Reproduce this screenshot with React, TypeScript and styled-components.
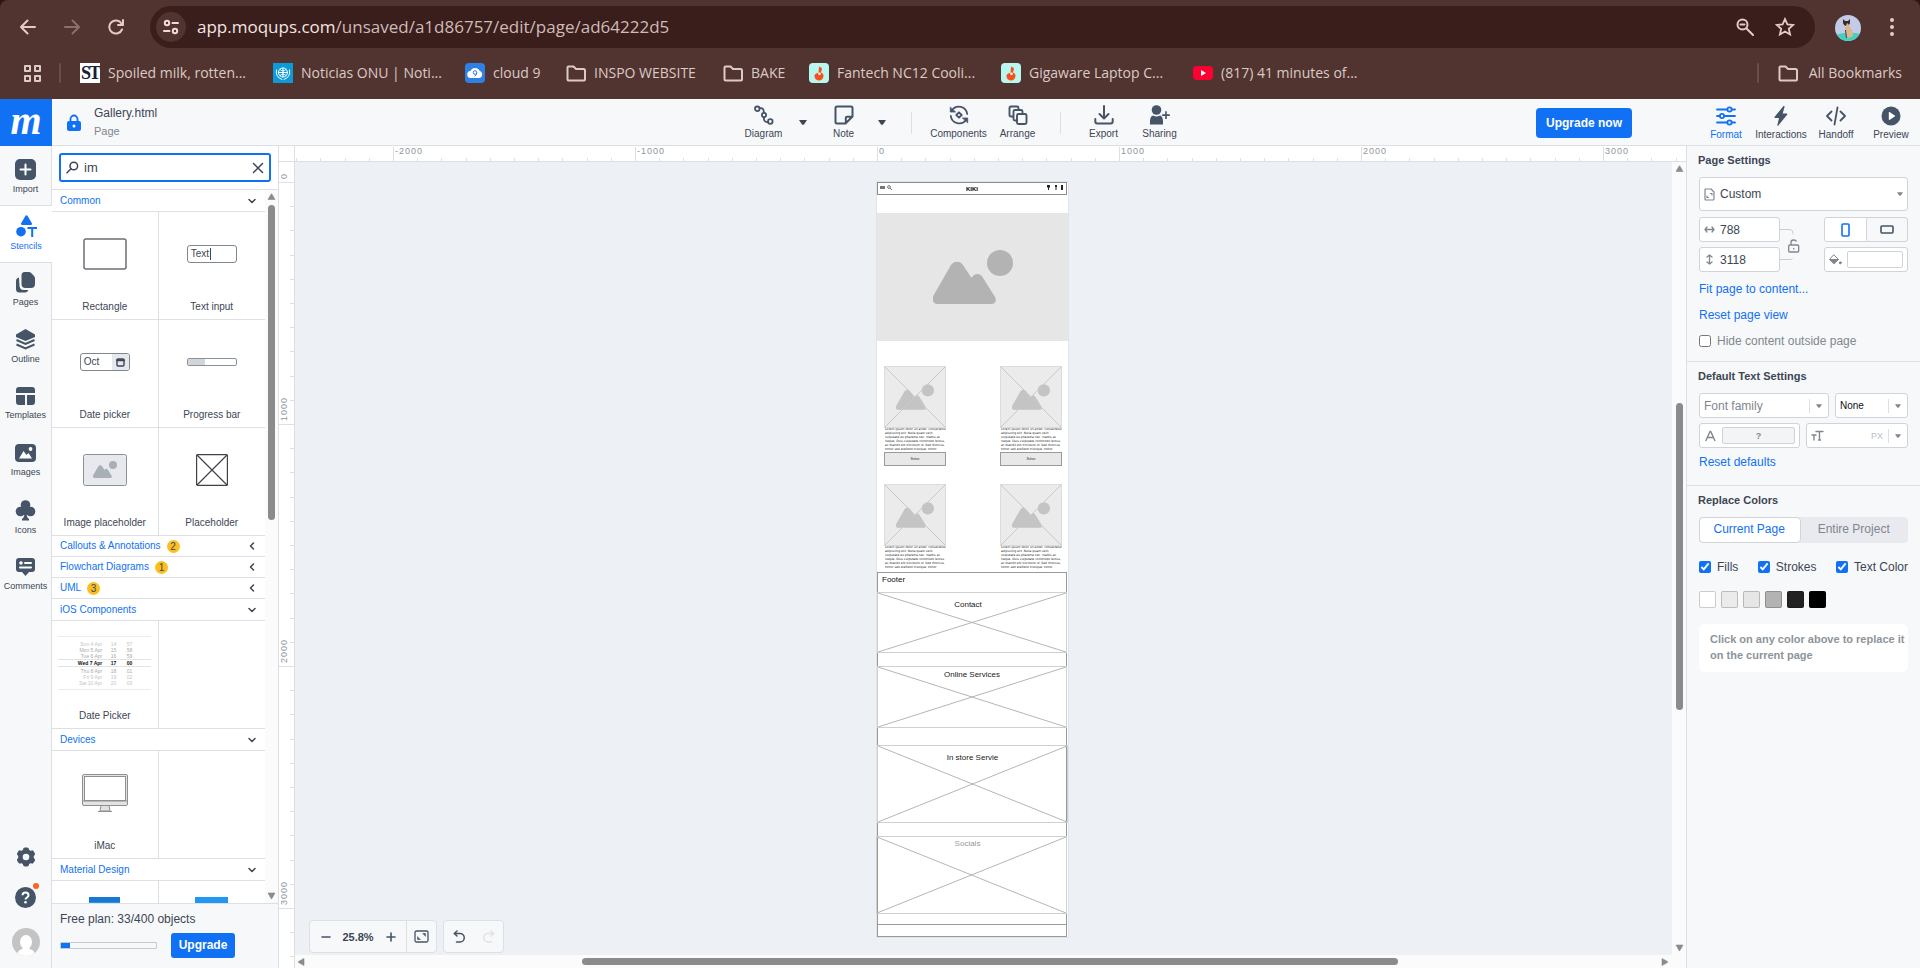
import React from "react";
import styled, { createGlobalStyle } from "styled-components";

const color = {
  chrome: "#513430",
  pill: "#3a1e1b",
  chromeText: "#dccac6",
  blue: "#1071f5",
  ink: "#3c4654",
  icon: "#455467",
  muted: "#7f878e",
  line: "#dcdfe4",
  field: "#d0d3d7",
  panel: "#f7f8fa",
  canvas: "#edf0f5",
  thumb: "#8b8b8b",
};
const sans = `"Liberation Sans", Arial, sans-serif`;
const ui = `"Open Sans", "Noto Sans", sans-serif`;

const GlobalStyle = createGlobalStyle`
  * { box-sizing: border-box; }
  body { margin: 0; font-family: ${sans}; color: ${color.ink}; }
  button, input, select { font: inherit; color: inherit; margin: 0; }
  button { border: 0; background: none; padding: 0; }
  svg { display: block; flex: none; }
`;

const Page = styled.div`
  display: flex;
  flex-direction: column;
  height: 100vh;
  min-height: 700px;
  overflow: hidden;
`;

/* ---------- browser bars ---------- */
const Browser = styled.header`
  flex: none;
  background: ${color.chrome};
  color: ${color.chromeText};
  font-family: ${ui};
  border-radius: 8px 8px 0 0;
  box-shadow: 0 -8px 0 8px #2b1613;
`;
const AddressRow = styled.div`
  display: flex;
  align-items: center;
  height: 54px;
  padding: 0 26px 0 16px;
`;
const ChromeButton = styled.button<{ $dim?: boolean; $gap?: number }>`
  width: 24px;
  height: 24px;
  margin-right: ${(p) => p.$gap ?? 20}px;
  display: grid;
  place-items: center;
  color: ${(p) => (p.$dim ? "#8d6f6a" : "#eac9c3")};
`;
const Omnibox = styled.div`
  flex: 1;
  display: flex;
  align-items: center;
  height: 42px;
  margin: 0 20px 0 2px;
  padding: 0 18px 0 6px;
  border-radius: 21px;
  background: ${color.pill};
`;
const SiteInfo = styled.button`
  width: 30px;
  height: 30px;
  border-radius: 50%;
  background: ${color.chrome};
  color: #efdcd8;
  display: grid;
  place-items: center;
`;
const Url = styled.div`
  flex: 1;
  margin-left: 11px;
  font-size: 17px;
  line-height: 24px;
  color: #cfbbb7;
  span { color: #f3e6e3; }
`;
const OmniButton = styled.button`
  width: 24px;
  height: 24px;
  margin-left: 16px;
  display: grid;
  place-items: center;
  color: #e3cbc6;
`;
const BookmarkRow = styled.nav`
  display: flex;
  align-items: center;
  height: 45px;
  padding: 0 18px 8px 23px;
  font-size: 14px;
  line-height: 20px;
`;
const Bar = styled.span`
  width: 2px;
  height: 20px;
  border-radius: 1px;
  background: #6d4c47;
  margin: 0 19px 0 18px;
`;
const Bookmark = styled.a<{ $label: number }>`
  display: flex;
  align-items: center;
  gap: 8px;
  margin-right: 24px;
  color: inherit;
  text-decoration: none;
  white-space: nowrap;
  span { width: ${(p) => p.$label}px; }
`;
const AllBookmarks = styled.a`
  display: flex;
  align-items: center;
  gap: 11px;
  color: inherit;
  text-decoration: none;
`;
const Favicon = styled.i<{ $bg: string; $round?: boolean }>`
  width: 20px;
  height: 20px;
  display: grid;
  place-items: center;
  font-style: normal;
  overflow: hidden;
  background: ${(p) => p.$bg};
  border-radius: ${(p) => (p.$round ? 4 : 0)}px;
`;
const Monogram = styled.b`
  font: bold 18px/20px "Liberation Serif", serif;
  color: #14213d;
  letter-spacing: -2px;
`;
const Spacer = styled.div`
  flex: 1;
`;

/* ---------- app toolbar ---------- */
const TopBar = styled.header`
  flex: none;
  height: 47px;
  display: grid;
  grid-template-columns: 1fr auto 1fr;
  background: ${color.panel};
  border-bottom: 1px solid ${color.line};
`;
const TopSide = styled.div<{ $end?: boolean }>`
  display: flex;
  align-items: center;
  justify-content: ${(p) => (p.$end ? "flex-end" : "flex-start")};
`;
const Logo = styled.a`
  width: 52px;
  height: 47px;
  background: ${color.blue};
  color: #fff;
  text-align: center;
  text-decoration: none;
  font: italic bold 40px/44px "Liberation Serif", serif;
`;
const LockButton = styled.button`
  width: 14px;
  margin: 0 13px 0 15px;
  color: ${color.blue};
`;
const FileTitle = styled.div`
  padding-bottom: 2px;
  font-size: 12px;
  line-height: 18px;
  span { display: block; font-size: 11px; color: ${color.muted}; }
`;
const ToolGroup = styled.div`
  display: flex;
  padding-left: 14px;
`;
const Tool = styled.button<{ $w: number; $active?: boolean }>`
  width: ${(p) => p.$w}px;
  height: 46px;
  display: flex;
  flex-direction: column;
  align-items: center;
  padding-top: 6px;
  gap: 2px;
  font-size: 10px;
  line-height: 14px;
  color: ${(p) => (p.$active ? color.blue : color.icon)};
  span { color: ${(p) => (p.$active ? color.blue : color.ink)}; }
`;
const CaretButton = styled.button<{ $end?: boolean }>`
  width: 16px;
  height: 46px;
  display: grid;
  place-items: center;
  color: ${color.ink};
  margin: ${(p) => (p.$end ? "0 0 0 15px" : "0 18px 0 13px")};
`;
const ToolDivider = styled.span<{ $wide?: boolean }>`
  width: 1px;
  height: 22px;
  align-self: center;
  background: ${color.line};
  margin: ${(p) => (p.$wide ? "0 20px 0 21px" : "0 16px 0 10px")};
`;
const PrimaryButton = styled.button<{ $large?: boolean }>`
  flex: none;
  width: ${(p) => (p.$large ? 96 : 64)}px;
  height: ${(p) => (p.$large ? 30 : 25)}px;
  border-radius: ${(p) => (p.$large ? 4 : 3)}px;
  background: ${color.blue};
  color: #fff;
  font-size: 12px;
  font-weight: bold;
`;
const ModeTools = styled.div`
  display: flex;
  margin: 0 2px 0 66px;
`;

/* ---------- workspace ---------- */
const Workspace = styled.div`
  flex: 1;
  min-height: 0;
  display: flex;
`;
const Rail = styled.nav`
  flex: none;
  width: 52px;
  display: flex;
  flex-direction: column;
  background: ${color.panel};
  border-right: 1px solid ${color.line};
`;
const RailItem = styled.button<{ $active?: boolean; $tall?: boolean }>`
  height: ${(p) => (p.$tall ? 60 : 57)}px;
  margin-right: ${(p) => (p.$active ? -1 : 0)}px;
  padding-top: ${(p) => (p.$tall ? 13 : 9)}px;
  display: flex;
  flex-direction: column;
  align-items: center;
  gap: 3px;
  font-size: 9px;
  line-height: 12px;
  color: ${(p) => (p.$active ? color.blue : color.icon)};
  background: ${(p) => (p.$active ? "#fff" : "transparent")};
  border-bottom: ${(p) => (p.$active || p.$tall ? `1px solid ${color.line}` : "0")};
  span { color: ${(p) => (p.$active ? color.blue : color.ink)}; }
`;
const RailFoot = styled.div`
  margin-top: auto;
  padding-bottom: 12px;
  display: flex;
  flex-direction: column;
  align-items: center;
  gap: 20px;
  color: ${color.icon};
`;
const HelpButton = styled.button`
  position: relative;
  color: inherit;
`;
const Alert = styled.span`
  position: absolute;
  right: -3px;
  top: -4px;
  width: 6px;
  height: 6px;
  border-radius: 50%;
  background: #ff6320;
`;

const StencilPanel = styled.aside`
  flex: none;
  width: 227px;
  display: flex;
  flex-direction: column;
  background: #fff;
  border-right: 1px solid ${color.line};
`;
const SearchBox = styled.label`
  flex: none;
  height: 29px;
  margin: 7px;
  display: flex;
  align-items: center;
  padding: 0 5px;
  border: 2px solid ${color.blue};
  border-radius: 3px;
`;
const SearchInput = styled.input`
  flex: 1;
  min-width: 0;
  border: 0;
  outline: 0;
  padding: 0 0 0 5px;
  font-size: 13px;
  background: transparent;
`;
const StencilBody = styled.div`
  flex: 1;
  min-height: 0;
  display: flex;
  border-top: 1px solid ${color.line};
`;
const StencilList = styled.div`
  flex: 1;
  overflow: hidden;
`;
const SectionHead = styled.button<{ $open?: boolean }>`
  width: 100%;
  height: ${(p) => (p.$open ? 22 : 21)}px;
  display: flex;
  align-items: center;
  gap: 6px;
  padding: 0 9px 0 8px;
  border-bottom: 1px solid ${color.line};
  font-size: 10px;
  line-height: 16px;
  color: ${color.blue};
  svg { margin-left: auto; color: ${color.ink}; }
`;
const Count = styled.span`
  width: 13px;
  height: 13px;
  border-radius: 50%;
  background: #fcbf22;
  color: ${color.ink};
  line-height: 13px;
  text-align: center;
`;
const StencilGrid = styled.div`
  display: grid;
  grid-template-columns: 1fr 1fr;
`;
const Stencil = styled.button`
  height: 108px;
  border-bottom: 1px solid ${color.line};
  display: flex;
  flex-direction: column;
  align-items: center;
  font-size: 10px;
  line-height: 14px;
  &:nth-child(odd) { border-right: 1px solid ${color.line}; }
`;
const Thumb = styled.span`
  height: 88px;
  padding-bottom: 4px;
  display: grid;
  place-items: center;
`;
const FieldThumb = styled.span`
  width: 50px;
  height: 18px;
  border: 1px solid #7e8890;
  border-radius: 3px;
  padding-left: 3px;
  text-align: left;
  line-height: 16px;
  display: flex;
  align-items: center;
  justify-content: space-between;
  overflow: hidden;
`;
const TextCaret = styled.span`
  display: inline-block;
  width: 1px;
  height: 12px;
  margin-left: 1px;
  vertical-align: middle;
  background: ${color.ink};
`;
const CalendarCap = styled.span`
  width: 17px;
  height: 16px;
  background: #e7e8ed;
  display: grid;
  place-items: center;
  color: ${color.ink};
`;
const Wheel = styled.span`
  width: 93px;
  height: 54px;
  display: grid;
  align-content: space-between;
  border: solid #ececec;
  border-width: 1px 0;
  padding: 4px 0 3px;
  font-size: 5px;
  line-height: 6px;
`;
const WheelRow = styled.span<{ $on?: boolean; $faint?: boolean }>`
  display: grid;
  grid-template-columns: 44px 14px 16px;
  justify-content: start;
  text-align: right;
  color: ${(p) => (p.$on ? "#111" : p.$faint ? "#c4c4c4" : "#aaa")};
  font-weight: ${(p) => (p.$on ? "bold" : "normal")};
  border: solid #e3e3e3;
  border-width: ${(p) => (p.$on ? "1px 0" : "0")};
`;
const PlanFoot = styled.footer`
  flex: none;
  height: 65px;
  padding: 8px 8px 0;
  background: ${color.panel};
  border-top: 1px solid ${color.line};
  font-size: 12px;
  line-height: 15px;
`;
const PlanRow = styled.div`
  display: flex;
  align-items: center;
  gap: 14px;
  margin-top: 6px;
`;
const Meter = styled.div`
  width: 97px;
  height: 7px;
  border: 1px solid #c5cad0;
  border-radius: 1px;
  background: #f7f8fa;
  &::before {
    content: "";
    display: block;
    width: 9%;
    height: 5px;
    background: ${color.blue};
  }
`;

/* ---------- scroll bars ---------- */
const Track = styled.div<{ $row?: boolean; $size: number }>`
  flex: none;
  display: flex;
  flex-direction: ${(p) => (p.$row ? "row" : "column")};
  align-items: center;
  background: #fbfbfb;
  color: ${color.thumb};
  ${(p) =>
    p.$row
      ? `height: ${p.$size}px; padding: 0 2px;`
      : `width: ${p.$size}px; padding: 3px 0;`}
  svg { margin: ${(p) => (p.$row ? "0 4px 0 0" : "0 0 4px")}; }
  svg:last-child { margin: ${(p) => (p.$row ? "0 0 0 4px" : "4px 0 0")}; }
`;
const Space = styled.span<{ $n: number }>`
  flex: ${(p) => p.$n} 1 0;
`;
const Handle = styled.span<{ $n: number; $row?: boolean }>`
  flex: ${(p) => p.$n} 1 0;
  ${(p) => (p.$row ? "height" : "width")}: 7px;
  border-radius: 4px;
  background: ${color.thumb};
`;

/* ---------- canvas ---------- */
const CanvasArea = styled.main`
  flex: 1;
  min-width: 0;
  display: grid;
  grid-template: 16px 1fr / 16px 1fr;
  background: #fff;
`;
const RulerCorner = styled.div`
  border: solid ${color.line};
  border-width: 0 1px 1px 0;
`;
const RulerTop = styled.div`
  overflow: hidden;
  border-bottom: 1px solid ${color.line};
`;
const RulerSide = styled.div`
  overflow: hidden;
  border-right: 1px solid ${color.line};
`;
const Stage = styled.div`
  min-width: 0;
  min-height: 0;
  display: grid;
  grid-template: 1fr 13px / 1fr 14px;
`;
const Surface = styled.div`
  position: relative;
  overflow: hidden;
  background: ${color.canvas};
`;
const TrackCorner = styled.div`
  background: #fbfbfb;
`;
const FloatBar = styled.div`
  position: absolute;
  left: 14px;
  bottom: 2px;
  display: flex;
  gap: 6px;
`;
const FloatGroup = styled.div`
  display: flex;
  align-items: center;
  height: 33px;
  background: ${color.panel};
  border: 1px solid ${color.line};
  border-radius: 4px;
  font-size: 11px;
  font-weight: bold;
`;
const FloatButton = styled.button<{ $w: number; $off?: boolean; $split?: boolean }>`
  width: ${(p) => p.$w}px;
  height: 31px;
  display: grid;
  place-items: center;
  color: ${(p) => (p.$off ? "#dfe2e7" : color.icon)};
  border-left: ${(p) => (p.$split ? `1px solid ${color.line}` : "0")};
`;
const ZoomValue = styled.output`
  width: 34px;
  text-align: center;
`;

/* the document page, on which every object has its own place */
const Artboard = styled.div`
  position: absolute;
  left: 582px;
  top: 20px;
  width: 191px;
  height: 755px;
  background: #fff;
  outline: 1px solid #e1e4e8;
`;
const Placed = styled.div<{ $x: number; $y: number; $w: number; $h: number; $stroke?: string; $fill?: string }>`
  position: absolute;
  left: ${(p) => p.$x}px;
  top: ${(p) => p.$y}px;
  width: ${(p) => p.$w}px;
  height: ${(p) => p.$h}px;
  border: ${(p) => (p.$stroke ? `1px solid ${p.$stroke}` : "0")};
  background: ${(p) => p.$fill || "transparent"};
`;
const SiteBar = styled(Placed)`
  display: grid;
  grid-template-columns: 1fr auto 1fr;
  align-items: center;
  padding: 0 2px 2px;
  svg:last-child { justify-self: end; }
`;
const SiteName = styled.b`
  padding-top: 2px;
  font-size: 6px;
  line-height: 8px;
  color: #000;
`;
const Copy = styled.p`
  margin: 0;
  font-family: "DejaVu Sans", sans-serif;
  font-size: 3px;
  line-height: 4px;
  white-space: pre;
  color: #222;
`;
const SmallButton = styled(Placed)`
  font-size: 3px;
  line-height: 12px;
  text-align: center;
  color: #333;
`;
const Caption = styled.div<{ $tone?: string; $pad: number; $shift?: boolean }>`
  position: relative;
  padding: ${(p) => p.$pad}px ${(p) => (p.$shift ? 8 : 0)}px 0 0;
  text-align: center;
  font-size: 8px;
  line-height: 10px;
  color: ${(p) => p.$tone || "#222"};
`;
const CrossSvg = styled.svg`
  position: absolute;
  inset: 0;
  width: 100%;
  height: 100%;
`;
const FooterText = styled.div`
  padding: 2px 4px;
  font-size: 8px;
  line-height: 10px;
  color: #111;
`;

/* ---------- format panel ---------- */
const Format = styled.aside`
  flex: none;
  width: 234px;
  background: ${color.panel};
  border-left: 1px solid ${color.line};
  font-size: 12px;
`;
const Group = styled.section`
  padding: 7px 12px 0;
  border-bottom: 1px solid ${color.line};
  &:last-child { border-bottom: 0; }
`;
const Heading = styled.h2`
  margin: 0 0 9px -1px;
  font-size: 11px;
  line-height: 15px;
`;
const Row = styled.div<{ $gap?: number; $top?: number; $bottom?: number }>`
  display: flex;
  gap: ${(p) => p.$gap ?? 6}px;
  margin-top: ${(p) => p.$top ?? 0}px;
  margin-bottom: ${(p) => p.$bottom ?? 0}px;
`;
const Field = styled.label<{ $h?: number; $w?: number }>`
  ${(p) => (p.$w ? `flex: none; width: ${p.$w}px;` : "flex: 1; min-width: 0;")}
  height: ${(p) => p.$h || 25}px;
  display: flex;
  align-items: center;
  gap: 5px;
  padding: 0 4px;
  background: #fff;
  border: 1px solid ${color.field};
  border-radius: 3px;
  color: ${color.muted};
`;
const Select = styled.select<{ $small?: boolean; $muted?: boolean }>`
  appearance: none;
  flex: 1;
  min-width: 0;
  border: 0;
  outline: 0;
  padding: 0;
  background: transparent;
  font-size: ${(p) => (p.$small ? 10 : 12)}px;
  color: ${(p) => (p.$muted ? color.muted : p.$small ? "#111" : color.ink)};
`;
const NumberInput = styled.input`
  flex: 1;
  min-width: 0;
  border: 0;
  outline: 0;
  padding: 0;
  background: transparent;
  color: ${color.ink};
`;
const CaretBox = styled.span`
  height: 14px;
  padding: 0 2px 0 6px;
  display: grid;
  place-items: center;
  border-left: 1px solid ${color.line};
`;
const Stack = styled.div<{ $w: number }>`
  flex: none;
  width: ${(p) => p.$w}px;
  display: flex;
  flex-direction: column;
  gap: 5px;
  label { flex: none; width: 100%; }
`;
const LinkMark = styled.div`
  flex: 1;
  padding-top: 12px;
`;
const Segmented = styled.div`
  display: flex;
  height: 25px;
  border: 1px solid ${color.field};
  border-radius: 3px;
`;
const Segment = styled.button<{ $on?: boolean }>`
  flex: 1;
  display: grid;
  place-items: center;
  border-radius: 3px;
  background: ${(p) => (p.$on ? "#fff" : "transparent")};
  color: ${(p) => (p.$on ? color.blue : color.icon)};
  & + & { border-left: 1px solid ${color.field}; }
`;
const ColorWell = styled.button<{ $fill: string }>`
  flex: 1;
  height: 17px;
  border: 1px solid ${color.field};
  border-radius: 2px;
  background: ${(p) => p.$fill};
  font-size: 9px;
  font-weight: bold;
  color: ${color.muted};
`;
const Unit = styled.span`
  font-size: 9px;
  color: #b9bfc5;
`;
const Action = styled.a<{ $top: number }>`
  display: block;
  width: max-content;
  margin-top: ${(p) => p.$top}px;
  line-height: 16px;
  color: ${color.blue};
  text-decoration: none;
`;
const Check = styled.label<{ $muted?: boolean }>`
  display: flex;
  align-items: center;
  gap: 6px;
  line-height: 16px;
  color: ${(p) => (p.$muted ? color.muted : color.ink)};
  input { width: 12px; height: 12px; accent-color: ${color.blue}; }
`;
const CheckRow = styled.div`
  display: flex;
  justify-content: space-between;
  margin-top: 16px;
`;
const Tabs = styled.div`
  display: flex;
  height: 26px;
  border-radius: 4px;
  background: #e9e9f0;
`;
const Tab = styled.button<{ $on?: boolean }>`
  flex: ${(p) => (p.$on ? "0 0 49%" : "1")};
  border-radius: 4px;
  border: 1px solid ${(p) => (p.$on ? color.field : "transparent")};
  background: ${(p) => (p.$on ? "#fff" : "transparent")};
  color: ${(p) => (p.$on ? color.blue : color.muted)};
  line-height: 20px;
  padding: 0 2px 3px 0;
`;
const Swatch = styled.button<{ $fill: string }>`
  width: 17px;
  height: 17px;
  border-radius: 2px;
  border: 1px solid rgba(0, 0, 0, 0.2);
  background: ${(p) => p.$fill};
`;
const Hint = styled.p`
  margin: 16px 0 0;
  padding: 7px 3px 9px 11px;
  border-radius: 6px;
  background: #fff;
  font-size: 11px;
  line-height: 16px;
  font-weight: bold;
  color: #8d949a;
`;

/* ---------- drawings ---------- */
const Svg = ({ w, h = w, vb, sw = 2, children }: { w: number; h?: number; vb?: string; sw?: number; children: React.ReactNode }) => (
  <svg width={w} height={h} viewBox={vb || `0 0 ${w} ${h}`} fill="none" stroke="currentColor" strokeWidth={sw} strokeLinecap="round" strokeLinejoin="round" aria-hidden>
    {children}
  </svg>
);
const Caret = ({ w = 8 }) => (
  <svg width={w} height={w === 8 ? 5 : 4} viewBox="0 0 8 5" fill="currentColor" aria-hidden>
    <path d="M0 0h8L5 4.4q-1 .8-2 0z" />
  </svg>
);
const Folder = () => (
  <Svg w={20} h={20} sw={2}>
    <path d="M1.5 16.5v-12q0-1 1-1h5l2.5 2.5h7.500q1.500 0 1.500 1.500v9q0 1-1 1h-15.500q-1 0-1-1z" />
  </Svg>
);
const MOUNTAINS = "M4 43C0 43-1.500 38 .5 34.500L18 4C20.500-.5 27.500-.5 30 4L38.500 17C41 12 47 11.500 49.500 16L62 36C64 40 62 43 58 43Z";
const PictureMark = ({ w, h, fill }: { w: number; h: number; fill: string }) => (
  <svg width={w} height={h} viewBox="0 0 80 54" fill={fill} aria-hidden>
    <circle cx="67" cy="13" r="13" />
    <path transform="translate(0 11)" d={MOUNTAINS} />
  </svg>
);
const Arrow = ({ dir }: { dir: "up" | "down" | "left" | "right" }) => {
  const paths = {
    up: "M1 6.500L4 1.200Q4.500.6 5 1.200L8 6.500Z",
    down: "M1 1H8L5 6.400Q4.500 7 4 6.400Z",
    left: "M7 .5V7.500L1.500 4.500Q1 4 1.500 3.500Z",
    right: "M1 .5V7.500L6.500 4.500Q7 4 6.500 3.500Z",
  };
  return (
    <svg width="9" height="8" viewBox="0 0 9 8" fill="currentColor" stroke="currentColor" strokeWidth=".6" aria-hidden>
      <path d={paths[dir]} />
    </svg>
  );
};
const Chevron = ({ open }: { open?: boolean }) => (
  <Svg w={8} h={8} sw={1.5}>
    <path d={open ? "M1 2.500L4 5.500L7 2.500" : "M5.500 1L2.500 4L5.500 7"} />
  </Svg>
);

const DiagramIcon = () => (
  <Svg w={20} sw={1.800}>
    <circle cx="3.300" cy="3.800" r="2.300" /><circle cx="10" cy="10" r="2.100" /><circle cx="16.300" cy="16.500" r="2.300" />
    <path d="M5.600 3.200C8.500 2.500 10 4 9.800 7.800M10 12.200C9.500 15.500 11 17.500 14 17" />
  </Svg>
);
const NoteIcon = () => (
  <Svg w={20} sw={2}>
    <path d="M3 1.500h14q1.500 0 1.500 1.500v8.500l-7 7H3q-1.500 0-1.500-1.500V3q0-1.500 1.500-1.500zM18 11.800h-5q-1.200 0-1.200 1.200v5" />
  </Svg>
);
const ComponentsIcon = () => (
  <Svg w={20} sw={1.800}>
    <path d="M2.800 5.500A8.400 8.400 0 0 1 18.200 9M17.200 14.500A8.400 8.400 0 0 1 1.800 11" />
    <path d="M1.300 2.500V7h5z M18.700 17.500V13h-5z" fill="currentColor" strokeWidth=".8" />
    <path d="M10 7.300L12.700 10L10 12.700L7.300 10z" />
  </Svg>
);
const ArrangeIcon = () => (
  <Svg w={20} sw={1.900}>
    <path d="M4.500 11.500H3q-1.500 0-1.500-1.500V3q0-1.500 1.500-1.500h6q1.500 0 1.500 1.500v1.500M8.500 15.500H7q-1.500 0-1.500-1.500V6.500Q5.500 5 7 5h6q1.500 0 1.500 1.500v1" />
    <rect x="9" y="9" width="9.500" height="10" rx="1.500" />
  </Svg>
);
const ExportIcon = () => (
  <Svg w={20} sw={2}>
    <path d="M10 1v12M5.500 9l4.500 4.500L14.500 9M1.300 14v2.500q0 2 2 2h13.400q2 0 2-2V14" />
  </Svg>
);
const SharingIcon = () => (
  <svg width="21" height="20" viewBox="0 0 21 20" fill="currentColor" aria-hidden>
    <circle cx="7.500" cy="5" r="4.800" />
    <path d="M1 19.500V15.500Q1.500 11 4 10.500Q7.500 12.500 11 10.500Q13.500 11 14 15.500V19.500Z" />
    <path d="M16.200 6.300v3h-3v1.600h3v3h1.600v-3h3V9.300h-3v-3z" />
  </svg>
);
const FormatIcon = () => (
  <Svg w={20} sw={1.800}>
    <path d="M1 3.500h10M16 3.500h3M1 10h2.500M8.500 10H19M1 16.500h10M16 16.500h3" />
    <circle cx="13.500" cy="3.500" r="2.100" /><circle cx="6" cy="10" r="2.100" /><circle cx="13.500" cy="16.500" r="2.100" />
  </Svg>
);
const BoltIcon = () => (
  <svg width="20" height="20" viewBox="0 0 20 20" fill="currentColor" aria-hidden>
    <path d="M12.500 0L3.500 11Q3 12 4 12h4L6.300 19.500Q6.500 20.300 7.300 19.600L16.300 8.500Q16.800 7.500 15.700 7.500H11.700L13.600.8Q13.500-.5 12.500 0z" />
  </svg>
);
const CodeIcon = () => (
  <Svg w={20} sw={1.800}><path d="M5.500 5.500L1 10l4.500 4.500M14.500 5.500L19 10l-4.500 4.500M11.500 1.500l-3 17" /></Svg>
);
const PlayIcon = () => (
  <svg width="20" height="20" viewBox="0 0 20 20" aria-hidden>
    <circle cx="10" cy="10" r="9.500" fill="currentColor" />
    <path d="M7.800 6.600v6.800q.2.800 1 .3l5-3.300q.5-.4 0-.8l-5-3.300q-.8-.5-1 .3z" fill="#fff" />
  </svg>
);

const Fill = ({ children, h = 20 }: { children: React.ReactNode; h?: number }) => (
  <svg width="21" height={h} viewBox={`0 0 21 ${h}`} fill="currentColor" aria-hidden>{children}</svg>
);
const railItems: { label: string; icon: React.ReactNode; active?: boolean; tall?: boolean }[] = [
  { label: "Import", tall: true, icon: <Fill h={21}><rect width="21" height="21" rx="5" /><path d="M10.500 5.500v10M5.500 10.500h10" stroke="#fff" strokeWidth="2" strokeLinecap="round" /></Fill> },
  { label: "Stencils", active: true, icon: <Fill h={22}><path d="M9.500.8q1-1.200 2 0L16 8.500q.5 1.300-1 1.500H6q-1.500-.2-1-1.500z" /><circle cx="5" cy="16.700" r="4.800" /><path d="M11.500 12h9.500v2h-3.800v8h-2v-8h-3.700z" /></Fill> },
  { label: "Pages", icon: <Fill h={21}><path d="M4 5.500Q1 6 1 9v8q0 3.500 3.500 3.500H10q2.500 0 3.300-2.500H8.500Q5 18 4.500 14z" /><path d="M9.500 0H14q1.200 0 2.200 1L19 4q1 1 1 2.500V12q0 4-4 4h-5.500q-4 0-4-4V3.500Q6.500 0 9.500 0z" /></Fill> },
  { label: "Outline", icon: <Fill h={21}><path d="M10.500 0L20 5.500v2.500l-9.500 4L1 8V5.500z" /><path d="M1.500 11l9 4 9-4M1.500 15.500l9 4 9-4" fill="none" stroke="currentColor" strokeWidth="2" /></Fill> },
  { label: "Templates", icon: <Fill h={20}><path d="M4 1h13q3 0 3 3v3H1V4q0-3 3-3z" /><path d="M1 9h9v10H4q-3 0-3-3zM12 9h8v7q0 3-3 3h-5z" /></Fill> },
  { label: "Images", icon: <Fill h={20}><rect y="1" width="21" height="18" rx="4" /><path d="M4 15.500l4.500-7.500 3 4 2-2 3.500 5.500z" fill="#fff" /><circle cx="15.500" cy="6" r="1.900" fill="#fff" /></Fill> },
  { label: "Icons", icon: <Fill h={21}><circle cx="10.500" cy="5" r="4.800" /><circle cx="5.500" cy="11.500" r="4.800" /><circle cx="15.500" cy="11.500" r="4.800" /><path d="M8 7h5v8h-5zM9.500 13h2q0 4.500 2.500 6v1.500H7V19q2.500-1.500 2.500-6z" /></Fill> },
  { label: "Comments", icon: <Fill h={20}><path d="M4 1h13q3 0 3 3v8q0 3-3 3h-3l-3.500 4L7 15H4q-3 0-3-3V4q0-3 3-3z" /><circle cx="6" cy="6" r="1.800" fill="#fff" /><path d="M10 6h6M5 10.500h11" stroke="#fff" strokeWidth="2" strokeLinecap="round" /></Fill> },
];

const Gear = () => (
  <svg width="20" height="20" viewBox="0 0 20 20" aria-hidden>
    <g fill="currentColor">
      {[0, 60, 120].map((a) => (
        <rect key={a} x="7" y=".5" width="6" height="19" rx="2" transform={`rotate(${a} 10 10)`} />
      ))}
      <circle cx="10" cy="10" r="7.800" />
    </g>
    <circle cx="10" cy="10" r="3.300" fill={color.panel} />
  </svg>
);
const UserAvatar = () => (
  <svg width="28" height="28" viewBox="0 0 28 28" aria-hidden>
    <clipPath id="avatar"><circle cx="14" cy="14" r="14" /></clipPath>
    <g clipPath="url(#avatar)">
      <rect width="28" height="28" fill="#c4c4c4" />
      <ellipse cx="14" cy="14" rx="6" ry="7" fill="#fff" />
      <path d="M5 28Q5 22 10.500 21V17h7v4Q23 22 23 28z" fill="#fff" />
    </g>
  </svg>
);

/* ---------- rulers ---------- */
const SCALE = 0.242;
const range = (from: number, to: number) => Array.from({ length: to - from + 1 }, (_, i) => i + from);
const Ruler = ({ origin, from, to, vertical }: { origin: number; from: number; to: number; vertical?: boolean }) => (
  <svg width={vertical ? 15 : "100%"} height={vertical ? "100%" : 15} fill="#8e959b" fontSize="9" letterSpacing="1" fontFamily={sans}>
    {range(from, to).map((n) => {
      const at = Math.round(origin + n * 100 * SCALE);
      const major = n % 10 === 0;
      return vertical ? (
        <g key={n}>
          <rect x={major ? 0 : 11} y={at} width="15" height="1" fill={color.line} />
          {major && <text transform={`translate(8 ${at - 3}) rotate(-90)`}>{n * 100}</text>}
        </g>
      ) : (
        <g key={n}>
          <rect x={at} y={major ? 1 : 12} width="1" height="15" fill={color.line} />
          {major && <text x={at + 2} y="8">{n * 100}</text>}
        </g>
      );
    })}
  </svg>
);

/* ---------- document content ---------- */
const lorem = [
  "Lorem ipsum dolor sit amet, consectetur",
  "adipiscing elit. Nulla quam velit,",
  "vulputate eu pharetra nec, mattis ac",
  "neque. Duis vulputate commodo lectus,",
  "ac blandit elit tincidunt id. Sed rhoncus,",
  "tortor sed eleifend tristique, tortor",
].join("\n");

const Cross = ({ stroke = "#b5b5b5" }) => (
  <CrossSvg stroke={stroke} strokeWidth="1" aria-hidden>
    <line x1="0" y1="0" x2="100%" y2="100%" />
    <line x1="100%" y1="0" x2="0" y2="100%" />
  </CrossSvg>
);
const ProductCard = ({ x, y, button }: { x: number; y: number; button?: boolean }) => (
  <>
    <Placed $x={x} $y={y} $w={62} $h={62} $fill="#ebebeb" $stroke="#dcdcdc">
      <Placed $x={11} $y={17} $w={38} $h={26}><PictureMark w={38} h={26} fill="#c4c4c4" /></Placed>
      <Cross stroke="#c8c8c8" />
    </Placed>
    <Placed $x={x + 1} $y={y + 61} $w={61} $h={24}><Copy>{lorem}</Copy></Placed>
    {button && <SmallButton $x={x} $y={y + 86} $w={62} $h={14} $stroke="#9a9a9a" $fill="#e8e8e8">Button</SmallButton>}
  </>
);
const footerBlocks = [
  { title: "Contact", x: 0, y: 410, w: 190, h: 61, pad: 7, shift: true },
  { title: "Online Services", x: 0, y: 484, w: 190, h: 62, pad: 3 },
  { title: "In store Servie", x: 0, y: 563, w: 191, h: 78, pad: 7 },
  { title: "Socials", x: -1, y: 654, w: 191, h: 78, pad: 2, tone: "#999", shift: true },
];

const bookmarks = [
  { label: "Spoiled milk, rotten...", w: 141, icon: <Favicon $bg="#fff"><Monogram>ST</Monogram></Favicon> },
  { label: "Noticias ONU | Noti...", w: 140, icon: <Favicon $bg="#0c9bd9"><Svg w={16} sw={1}><g stroke="#fff"><circle cx="8" cy="7.500" r="4.500" /><path d="M3.500 7.500h9M8 3v9M5 4.500q3 3 6 0M5 10.500q3-3 6 0M1.500 5Q0 12 7 14.500M14.500 5Q16 12 9 14.500" /></g></Svg></Favicon> },
  { label: "cloud 9", w: 49, icon: <Favicon $bg="#2f80e4" $round><svg width="16" height="14" viewBox="0 0 16 14"><path d="M4 12a3.500 3.500 0 0 1-.5-7 5 5 0 0 1 9.200 0A3.600 3.600 0 0 1 12 12z" fill="#fff" /><circle cx="8" cy="6.500" r="1.800" fill="none" stroke="#2f80e4" /><path d="M9.800 6.500Q9.800 9.500 7.500 10" fill="none" stroke="#2f80e4" /></svg></Favicon> },
  { label: "INSPO WEBSITE", w: 105, icon: <Folder /> },
  { label: "BAKE", w: 34, icon: <Folder /> },
  ...["Fantech NC12 Cooli...", "Gigaware Laptop C..."].map((label) => ({
    label, w: 140,
    icon: <Favicon $bg="#b9f7f0" $round><svg width="12" height="16" viewBox="0 0 12 16"><path d="M6 1.500l2.800 1.500q.6 2.500-1 4.500Q10.500 8 10.500 11a4.500 4.500 0 0 1-9 0Q1.500 8.500 5.500 7.800z" fill="#f4511e" /><circle cx="6.500" cy="8.800" r="1.300" fill="#fff" /></svg></Favicon>,
  })),
  { label: "(817) 41 minutes of...", w: 140, icon: <svg width="20" height="14" viewBox="0 0 20 14"><rect width="20" height="14" rx="4" fill="#ff0033" /><path d="M8 4l5 3-5 3z" fill="#fff" /></svg> },
];

const Section = ({ title, count, open, children }: { title: string; count?: number; open?: boolean; children?: React.ReactNode }) => (
  <>
    <SectionHead $open={open} aria-expanded={!!open}>
      {title}
      {count && <Count>{count}</Count>}
      <Chevron open={open} />
    </SectionHead>
    {children && <StencilGrid>{children}</StencilGrid>}
  </>
);
const Item = ({ label, children }: { label?: string; children: React.ReactNode }) => (
  <Stencil><Thumb>{children}</Thumb>{label}</Stencil>
);
const wheelRows = [
  ["Sun 4 Apr", "14", "57"], ["Mon 5 Apr", "15", "58"], ["Tue 6 Apr", "16", "59"], ["Wed 7 Apr", "17", "00"],
  ["Thu 8 Apr", "18", "01"], ["Fri 9 Apr", "19", "02"], ["Sat 10 Apr", "20", "03"],
];

export default function App() {
  return (
    <Page>
      <GlobalStyle />
      <Browser>
        <AddressRow>
          <ChromeButton aria-label="Back"><Svg w={16} sw={2}><path d="M15 8H1.500M7.500 1.500L1 8l6.500 6.500" /></Svg></ChromeButton>
          <ChromeButton aria-label="Forward" $dim><Svg w={16} sw={2}><path d="M1 8h13.500M8.500 1.500L15 8l-6.500 6.500" /></Svg></ChromeButton>
          <ChromeButton aria-label="Reload"><Svg w={16} sw={2}><path d="M14 10.500A6.600 6.600 0 1 1 13.500 4.500L15 6M15 1v5h-5" /></Svg></ChromeButton>
          <Omnibox>
            <SiteInfo aria-label="Site information"><Svg w={16} sw={2}><circle cx="4" cy="4" r="2.200" /><path d="M9.500 4H15M1 12h5.500" /><circle cx="12" cy="12" r="2.200" /></Svg></SiteInfo>
            <Url><span>app.moqups.com</span>/unsaved/a1d86757/edit/page/ad64222d5</Url>
            <OmniButton aria-label="Zoom"><Svg w={18} sw={2}><circle cx="6.500" cy="6.500" r="5" /><path d="M10.500 10.500L17 17M4.500 6.500h4" /></Svg></OmniButton>
            <OmniButton aria-label="Bookmark"><svg width="20" height="20" viewBox="0 0 20 20" fill="none" stroke="currentColor" strokeWidth="1.800"><path d="M10 2l2.400 5.300 5.800.6-4.400 3.900 1.300 5.700L10 14.500l-5.100 3 1.300-5.700L1.800 7.900l5.800-.6z" /></svg></OmniButton>
          </Omnibox>
          <ChromeButton aria-label="Profile" $gap={31}>
            <svg width="26" height="26" viewBox="0 0 26 26"><clipPath id="cat"><circle cx="13" cy="13" r="13" /></clipPath><g clipPath="url(#cat)"><rect width="26" height="26" fill="#c3cbe9" /><path d="M0 20q13-4 26-1v7H0z" fill="#43d0c0" /><path d="M10 12q5-2 7 3 2 4 0 7l-5 1q-2-5-2-11z" fill="#d9b98c" /><path d="M8 4l2 2h3l2-2v4q-1 3-3.500 3T8 8z" fill="#3b2c26" /><path d="M12 8q3 2 2 4l-3-1z" fill="#d9b98c" /><path d="M10 15l1 8h1l-1-8z" fill="#4c3b31" /></g></svg>
          </ChromeButton>
          <svg width="4" height="22" viewBox="0 0 4 22" fill="#eac9c3"><circle cx="2" cy="4" r="2" /><circle cx="2" cy="11" r="2" /><circle cx="2" cy="18" r="2" /></svg>
        </AddressRow>
        <BookmarkRow>
          <Svg w={18} sw={2}><rect x="2" y="2" width="5" height="5" /><rect x="12" y="2" width="5" height="5" /><rect x="2" y="12" width="5" height="5" /><rect x="12" y="12" width="5" height="5" /></Svg>
          <Bar />
          {bookmarks.map((b) => (
            <Bookmark key={b.label} href="#" $label={b.w}>{b.icon}<span>{b.label}</span></Bookmark>
          ))}
          <Spacer />
          <Bar />
          <AllBookmarks href="#"><Folder />All Bookmarks</AllBookmarks>
        </BookmarkRow>
      </Browser>

      <TopBar>
        <TopSide>
          <Logo href="#" aria-label="Home">m</Logo>
          <LockButton aria-label="Lock">
            <svg width="14" height="17" viewBox="0 0 14 17"><path d="M3.500 8V5a3.500 3.500 0 0 1 7 0v3" fill="none" stroke="currentColor" strokeWidth="1.800" /><rect y="7" width="14" height="10" rx="2" fill="currentColor" /><circle cx="7" cy="12" r="1.500" fill="#fff" /></svg>
          </LockButton>
          <FileTitle>Gallery.html<span>Page</span></FileTitle>
        </TopSide>
        <ToolGroup>
          <Tool $w={36}><DiagramIcon /><span>Diagram</span></Tool>
          <CaretButton aria-label="Diagram options"><Caret /></CaretButton>
          <Tool $w={30}><NoteIcon /><span>Note</span></Tool>
          <CaretButton aria-label="Note options" $end><Caret /></CaretButton>
          <ToolDivider $wide />
          <Tool $w={54}><ComponentsIcon /><span>Components</span></Tool>
          <Tool $w={64}><ArrangeIcon /><span>Arrange</span></Tool>
          <ToolDivider />
          <Tool $w={54}><ExportIcon /><span>Export</span></Tool>
          <Tool $w={58}><SharingIcon /><span>Sharing</span></Tool>
        </ToolGroup>
        <TopSide $end>
          <PrimaryButton $large>Upgrade now</PrimaryButton>
          <ModeTools>
            <Tool $w={56} $active><FormatIcon /><span>Format</span></Tool>
            <Tool $w={54}><BoltIcon /><span>Interactions</span></Tool>
            <Tool $w={56}><CodeIcon /><span>Handoff</span></Tool>
            <Tool $w={54}><PlayIcon /><span>Preview</span></Tool>
          </ModeTools>
        </TopSide>
      </TopBar>

      <Workspace>
        <Rail>
          {railItems.map((r) => (
            <RailItem key={r.label} $active={r.active} $tall={r.tall}>{r.icon}<span>{r.label}</span></RailItem>
          ))}
          <RailFoot>
            <button aria-label="Settings"><Gear /></button>
            <HelpButton aria-label="Help">
              <Fill h={21}><circle cx="10.500" cy="10.500" r="10.500" /><path d="M7.500 8.300Q7.500 5.500 10.500 5.500t3 2.700q0 1.300-1.500 2.300t-1.500 2" fill="none" stroke="#fff" strokeWidth="2" /><circle cx="10.500" cy="15.300" r="1.300" fill="#fff" /></Fill>
              <Alert />
            </HelpButton>
            <button aria-label="Account"><UserAvatar /></button>
          </RailFoot>
        </Rail>

        <StencilPanel>
          <SearchBox>
            <Svg w={13} sw={1.500}><circle cx="7.800" cy="5" r="3.800" /><path d="M5 7.800L1 11.800" /></Svg>
            <SearchInput aria-label="Search stencils" defaultValue="im" />
            <button aria-label="Clear search"><Svg w={12} sw={1.500}><path d="M1.500 1.500l9 9M10.500 1.500l-9 9" /></Svg></button>
          </SearchBox>
          <StencilBody>
            <StencilList>
              <Section title="Common" open>
                <Item label="Rectangle"><svg width="44" height="32"><rect x="1" y="1" width="42" height="30" rx="2" fill="#fff" stroke="#6d6f75" strokeWidth="1.500" /></svg></Item>
                <Item label="Text input"><FieldThumb><span>Text<TextCaret /></span></FieldThumb></Item>
                <Item label="Date picker"><FieldThumb>Oct<CalendarCap><Svg w={9} sw={1.400}><rect x="1" y="1" width="7" height="7" rx="1" /><path d="M1 2.200h7" strokeWidth="2" /></Svg></CalendarCap></FieldThumb></Item>
                <Item label="Progress bar"><svg width="50" height="8"><rect x=".5" y=".5" width="49" height="7" rx="1.500" fill="#fff" stroke="#8a9299" /><path d="M1 1h17v6H1z" fill="#d3d6d9" /></svg></Item>
                <Item label="Image placeholder"><svg width="44" height="32"><rect x=".5" y=".5" width="43" height="31" rx="2" fill="#e8e9ee" stroke="#8a9299" /><path transform="translate(10 11) scale(.3)" d={MOUNTAINS} fill="#a8afb6" /><circle cx="30" cy="11" r="4" fill="#a8afb6" /></svg></Item>
                <Item label="Placeholder"><svg width="32" height="32" fill="none" stroke="#3f434a" strokeWidth="1.200"><rect x=".6" y=".6" width="30.800" height="30.800" rx="1" /><path d="M1 1l30 30M31 1L1 31" /></svg></Item>
              </Section>
              <Section title="Callouts & Annotations" count={2} />
              <Section title="Flowchart Diagrams" count={1} />
              <Section title="UML" count={3} />
              <Section title="iOS Components" open>
                <Item label="Date Picker">
                  <Wheel>
                    {wheelRows.map((r, i) => (
                      <WheelRow key={r[0]} $on={i === 3} $faint={i < 1 || i > 4}>{r.map((c) => <span key={c}>{c}</span>)}</WheelRow>
                    ))}
                  </Wheel>
                </Item>
                <Stencil as="div" />
              </Section>
              <Section title="Devices" open>
                <Item label="iMac">
                  <svg width="46" height="38" fill="#e2e3e3" stroke="#8f8f8f"><rect x=".5" y=".5" width="45" height="31" rx="1.500" /><rect x="2.500" y="2.500" width="41" height="24" fill="#fff" /><path d="M.5 27h45" /><path d="M19 31.500h8l1 5.500h-10zM16 37.500h14" /></svg>
                </Item>
                <Stencil as="div" />
              </Section>
              <Section title="Material Design" open>
                <Item><svg width="31" height="52"><rect width="31" height="52" fill="#2196f3" /><rect width="31" height="5" fill="#1976d2" /></svg></Item>
                <Item><svg width="33" height="52"><rect width="33" height="52" fill="#2196f3" /></svg></Item>
              </Section>
            </StencilList>
            <Track $size={13}>
              <Arrow dir="up" /><Handle $n={316} /><Space $n={369} /><Arrow dir="down" />
            </Track>
          </StencilBody>
          <PlanFoot>
            Free plan: 33/400 objects
            <PlanRow><Meter /><PrimaryButton>Upgrade</PrimaryButton></PlanRow>
          </PlanFoot>
        </StencilPanel>

        <CanvasArea>
          <RulerCorner />
          <RulerTop><Ruler origin={582} from={-24} to={33} /></RulerTop>
          <RulerSide><Ruler vertical origin={20} from={0} to={33} /></RulerSide>
          <Stage>
            <Surface>
              <Artboard>
                <SiteBar $x={0} $y={0} $w={190} $h={13} $stroke="#8c8c8c">
                  <svg width="14" height="6" viewBox="0 0 14 6"><path d="M0 1h5v3H0z" fill="#777" /><circle cx="9" cy="2" r="1.400" fill="none" stroke="#555" strokeWidth=".8" /><path d="M10 3l2 2" stroke="#555" strokeWidth=".8" /></svg>
                  <SiteName>KIKI</SiteName>
                  <svg width="17" height="6" viewBox="0 0 17 6" fill="#222"><path d="M0 0h3v2l-1 1v2H1V3L0 2zM8 0h2v2H9.500v3H8.500V2H8zM14 0h2v5h-2z" /></svg>
                </SiteBar>
                <Placed $x={0} $y={31} $w={191} $h={128} $fill="#e6e6e6">
                  <Placed $x={56} $y={37} $w={80} $h={54}><PictureMark w={80} h={54} fill="#b3b3b3" /></Placed>
                </Placed>
                <ProductCard x={7} y={184} button />
                <ProductCard x={123} y={184} button />
                <ProductCard x={7} y={302} />
                <ProductCard x={123} y={302} />
                <Placed $x={0} $y={390} $w={190} $h={365} $stroke="#999" $fill="#fff"><FooterText>Footer</FooterText></Placed>
                {footerBlocks.map((b) => (
                  <Placed key={b.title} $x={b.x} $y={b.y} $w={b.w} $h={b.h} $stroke="#cfcfcf">
                    <Cross />
                    <Caption $pad={b.pad} $tone={b.tone} $shift={b.shift}>{b.title}</Caption>
                  </Placed>
                ))}
                <Placed $x={0} $y={742} $w={190} $h={13} $stroke="#999" />
              </Artboard>
              <FloatBar>
                <FloatGroup>
                  <FloatButton $w={31} aria-label="Zoom out"><Svg w={10} sw={1.600}><path d="M1 5h8" /></Svg></FloatButton>
                  <ZoomValue>25.8%</ZoomValue>
                  <FloatButton $w={31} aria-label="Zoom in"><Svg w={10} sw={1.600}><path d="M1 5h8M5 1v8" /></Svg></FloatButton>
                  <FloatButton $w={30} $split aria-label="Fit to screen"><Svg w={15} h={13} sw={1.300}><rect x="1" y="1" width="13" height="11" rx="1.500" /><path d="M9 3.500h2.500V6zM3.500 7v2.500H6z" fill="currentColor" strokeWidth=".6" /></Svg></FloatButton>
                </FloatGroup>
                <FloatGroup>
                  <FloatButton $w={30} aria-label="Undo"><Svg w={12} h={13} sw={1.500}><path d="M4 1L1.200 3.500L4 6M1.500 3.500H7a4.200 4.200 0 0 1 0 8.500H3.500" /></Svg></FloatButton>
                  <FloatButton $w={29} $off aria-label="Redo"><Svg w={12} h={13} sw={1.500}><path d="M8 1l2.800 2.500L8 6M10.500 3.500H5A4.200 4.200 0 0 0 5 12h3.500" /></Svg></FloatButton>
                </FloatGroup>
              </FloatBar>
            </Surface>
            <Track $size={14}>
              <Arrow dir="up" /><Space $n={226} /><Handle $n={307} /><Space $n={230} /><Arrow dir="down" />
            </Track>
            <Track $row $size={13}>
              <Arrow dir="left" /><Space $n={272} /><Handle $row $n={815} /><Space $n={259} /><Arrow dir="right" />
            </Track>
            <TrackCorner />
          </Stage>
        </CanvasArea>

        <Format>
          <Group>
            <Heading>Page Settings</Heading>
            <Row>
              <Field $h={34}>
                <Svg w={11} h={13} sw={1.200}><path d="M2 1h5l3 3v7q0 1-1 1H2q-1 0-1-1V2q0-1 1-1zM6.500 5.500h1.500V7M4.500 9.500H3V8" /></Svg>
                <Select aria-label="Page size" defaultValue="Custom"><option>Custom</option></Select>
                <Caret w={6} />
              </Field>
            </Row>
            <Row $top={6} $gap={0}>
              <Stack $w={81}>
                <Field><Svg w={11} h={9} sw={1.300}><path d="M1 4.500h9M3 2L1 4.500 3 7M8 2l2 2.500L8 7" /></Svg><NumberInput aria-label="Width" defaultValue="788" /></Field>
                <Field><Svg w={11} h={11} sw={1.300}><path d="M5.500 1v9M3 3l2.500-2L8 3M3 8l2.500 2L8 8" /></Svg><NumberInput aria-label="Height" defaultValue="3118" /></Field>
              </Stack>
              <LinkMark>
                <svg width="22" height="32" fill="none" stroke="#c9cdd2" aria-hidden>
                  <path d="M0 .5h10q3 0 3 4v1M0 30.500h10q2 0 2.500-1" />
                  <g stroke={color.muted} strokeWidth="1.300"><rect x="8.700" y="16" width="10" height="7" rx="1" /><path d="M11 16v-2.500q0-2.500 2.500-2.500t3 1.500M13.700 19v1.500" /></g>
                </svg>
              </LinkMark>
              <Stack $w={84}>
                <Segmented>
                  <Segment $on aria-label="Portrait"><Svg w={9} h={14} sw={1.600}><rect x="1" y="1" width="7" height="12" rx="1" /></Svg></Segment>
                  <Segment aria-label="Landscape"><Svg w={14} h={9} sw={1.600}><rect x="1" y="1" width="12" height="7" rx="1" /></Svg></Segment>
                </Segmented>
                <Field as="div" $w={84}>
                  <Svg w={13} h={11} sw={1}><path d="M5 1l4.500 4.500L5 9.500 1 5.500z" /><path d="M1 5.500h8.500L5 9.500z" fill="currentColor" /><circle cx="11.300" cy="8.800" r="1" fill="currentColor" /></Svg>
                  <ColorWell $fill="#fff" aria-label="Page fill" />
                </Field>
              </Stack>
            </Row>
            <Action href="#" $top={9}>Fit page to content...</Action>
            <Action href="#" $top={10}>Reset page view</Action>
            <Row $top={10} $bottom={12}><Check $muted><input type="checkbox" />Hide content outside page</Check></Row>
          </Group>
          <Group>
            <Heading>Default Text Settings</Heading>
            <Row>
              <Field><Select aria-label="Font family" $muted><option>Font family</option></Select><CaretBox><Caret w={6} /></CaretBox></Field>
              <Field $w={73}><Select aria-label="Font style" $small><option>None</option></Select><CaretBox><Caret w={6} /></CaretBox></Field>
            </Row>
            <Row $top={5}>
              <Field as="div" $w={101}>
                <Svg w={13} h={12} sw={1.400}><path d="M2 10.500L6 1.500h.8l4 9M3.500 7.500h6" /></Svg>
                <ColorWell $fill="#f3f4f6" aria-label="Text color">?</ColorWell>
              </Field>
              <Field>
                <Svg w={13} h={11} sw={1.400}><path d="M1 5h4M3 5v5M5 1.500h7M8.500 1.500V10M7.500 10h2" /></Svg>
                <NumberInput aria-label="Font size" />
                <Unit>PX</Unit><CaretBox><Caret w={6} /></CaretBox>
              </Field>
            </Row>
            <Row $top={6} $bottom={15}><Action href="#" $top={0}>Reset defaults</Action></Row>
          </Group>
          <Group>
            <Heading>Replace Colors</Heading>
            <Tabs>
              <Tab $on>Current Page</Tab>
              <Tab>Entire Project</Tab>
            </Tabs>
            <CheckRow>
              <Check><input type="checkbox" defaultChecked />Fills</Check>
              <Check><input type="checkbox" defaultChecked />Strokes</Check>
              <Check><input type="checkbox" defaultChecked />Text Color</Check>
            </CheckRow>
            <Row $gap={5} $top={16}>
              {["#ffffff", "#ebebeb", "#e6e6e6", "#b3b3b3", "#222222", "#000000"].map((c) => <Swatch key={c} $fill={c} aria-label={c} />)}
            </Row>
            <Hint>Click on any color above to replace it on the current page</Hint>
          </Group>
        </Format>
      </Workspace>
    </Page>
  );
}
